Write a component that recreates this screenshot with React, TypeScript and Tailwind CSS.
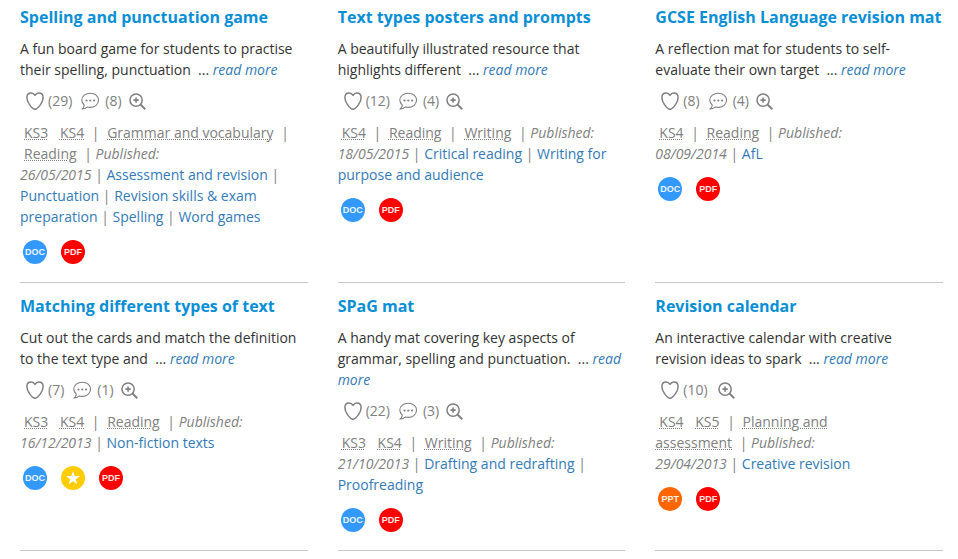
import { Fragment } from "react";

type FileType = "DOC" | "PDF" | "PPT" | "STAR";

interface Resource {
  title: string;
  summary: string;
  likes: number;
  comments?: number;
  stages: string[];
  subjects: string[];
  published: string;
  topics: string[];
  files: FileType[];
}

const resources: Resource[] = [
  {
    title: "Spelling and punctuation game",
    summary: "A fun board game for students to practise their spelling, punctuation",
    likes: 29,
    comments: 8,
    stages: ["KS3", "KS4"],
    subjects: ["Grammar and vocabulary", "Reading"],
    published: "26/05/2015",
    topics: ["Assessment and revision", "Punctuation", "Revision skills & exam preparation", "Spelling", "Word games"],
    files: ["DOC", "PDF"],
  },
  {
    title: "Text types posters and prompts",
    summary: "A beautifully illustrated resource that highlights different",
    likes: 12,
    comments: 4,
    stages: ["KS4"],
    subjects: ["Reading", "Writing"],
    published: "18/05/2015",
    topics: ["Critical reading", "Writing for purpose and audience"],
    files: ["DOC", "PDF"],
  },
  {
    title: "GCSE English Language revision mat",
    summary: "A reflection mat for students to self-evaluate their own target",
    likes: 8,
    comments: 4,
    stages: ["KS4"],
    subjects: ["Reading"],
    published: "08/09/2014",
    topics: ["AfL"],
    files: ["DOC", "PDF"],
  },
  {
    title: "Matching different types of text",
    summary: "Cut out the cards and match the definition to the text type and",
    likes: 7,
    comments: 1,
    stages: ["KS3", "KS4"],
    subjects: ["Reading"],
    published: "16/12/2013",
    topics: ["Non-fiction texts"],
    files: ["DOC", "STAR", "PDF"],
  },
  {
    title: "SPaG mat",
    summary: "A handy mat covering key aspects of grammar, spelling and punctuation.",
    likes: 22,
    comments: 3,
    stages: ["KS3", "KS4"],
    subjects: ["Writing"],
    published: "21/10/2013",
    topics: ["Drafting and redrafting", "Proofreading"],
    files: ["DOC", "PDF"],
  },
  {
    title: "Revision calendar",
    summary: "An interactive calendar with creative revision ideas to spark",
    likes: 10,
    stages: ["KS4", "KS5"],
    subjects: ["Planning and assessment"],
    published: "29/04/2013",
    topics: ["Creative revision"],
    files: ["PPT", "PDF"],
  },
];

const badgeColors: Record<FileType, string> = {
  DOC: "bg-[#3399ff]",
  PDF: "bg-[#ff0000]",
  PPT: "bg-[#ff6600]",
  STAR: "bg-[#ffcc00]",
};

const HeartIcon = () => (
  <svg width="18" height="18" viewBox="0 0 18 18" fill="none" stroke="currentColor" strokeWidth="1.5" strokeLinejoin="round">
    <path d="M9 3.4C8 1.700 6.800 1 5.200 1 2.600 1 .9 2.900.9 5.500c0 2.600 1 4.900 2.600 7.100 1.600 2.200 3.800 4.700 5.500 4.700s3.900-2.500 5.500-4.700c1.600-2.200 2.600-4.500 2.600-7.100C17.100 2.900 15.400 1 12.800 1 11.200 1 10 1.700 9 3.400z" />
  </svg>
);

const CommentIcon = () => (
  <svg width="18" height="18" viewBox="0 0 18 18" fill="none" stroke="currentColor" strokeWidth="1.100">
    <path d="M9.300 1.200C4.600 1.200.8 4.200.8 8c0 2 .9 3.700 2.400 5 .1 1.500-.5 2.800-1.900 4 2 0 3.700-.7 4.900-2 1 .3 2 .4 3.100.4 4.600 0 8.200-3.200 8.200-7.200S13.900 1.200 9.300 1.200z" />
    <g fill="currentColor" stroke="none">
      <circle cx="5.500" cy="8.500" r="1.100" />
      <circle cx="9.300" cy="8.500" r="1.100" />
      <circle cx="13.100" cy="8.500" r="1.100" />
    </g>
  </svg>
);

const ZoomIcon = () => (
  <svg width="17" height="17" viewBox="0 0 18 18" fill="none" stroke="currentColor" strokeWidth="1.600">
    <circle cx="7.500" cy="7.500" r="6.500" />
    <path d="M12.200 12.200l5 5" strokeWidth="2" />
    <path d="M7.500 4.700v5.600M4.700 7.500h5.600" strokeWidth="1.700" />
  </svg>
);

function FileBadge({ type }: { type: FileType }) {
  return (
    <span
      className={`flex size-6 items-center justify-center rounded-full font-['Liberation_Sans',Arial,sans-serif] text-[9px] leading-3 font-bold text-white/90 ${badgeColors[type]}`}
    >
      {type === "STAR" ? (
        <svg width="14" height="14" viewBox="0 0 14 14" className="fill-white">
          <path d="M7 0l1.700 5H14L9.800 8.200l1.500 5.100L7 10.200l-4.300 3.100 1.500-5.100L0 5h5.300z" />
        </svg>
      ) : (
        type
      )}
    </span>
  );
}

function Term({ name }: { name: string }) {
  return <abbr className="px-1 underline decoration-dotted decoration-1">{name}</abbr>;
}

function ResourceCard({ item }: { item: Resource }) {
  const hasComments = item.comments !== undefined;

  return (
    <article className="border-b border-[#c8c8c8] pb-[18px]">
      <h3 className="text-base leading-[22px] font-bold">
        <a href="#" className="text-[#0a8fd6]">{item.title}</a>
      </h3>

      <p className="mt-[10px] text-[#333]">
        {item.summary}&nbsp; ...{" "}
        <a href="#" className="text-[#337ab7] italic">read more</a>
      </p>

      <div className="mt-[7px] flex h-7 items-center pl-[6px]">
        <button type="button" aria-label="Like" className="flex items-center gap-1">
          <HeartIcon />
          <span className="pb-[2px]">({item.likes})</span>
        </button>
        {hasComments && (
          <a href="#" aria-label="Comments" className="ml-[9px] flex items-center gap-[6px]">
            <CommentIcon />
            <span className="pb-[2px]">({item.comments})</span>
          </a>
        )}
        <button type="button" aria-label="Preview" className={hasComments ? "ml-[7px]" : "ml-[10px]"}>
          <ZoomIcon />
        </button>
      </div>

      <p className="mt-[7px] pr-4">
        {item.stages.map((stage) => (
          <Fragment key={stage}>
            <Term name={stage} />{" "}
          </Fragment>
        ))}
        {item.subjects.map((subject, i) => (
          <Fragment key={subject}>
            {"| "}
            <Term name={subject} />
            {i < item.subjects.length - 1 && " "}
          </Fragment>
        ))}
        <em className="whitespace-nowrap">
          <span className="not-italic">&nbsp;| </span>
          Published:
          <br />
          {item.published}
        </em>
        {item.topics.map((topic) => (
          <Fragment key={topic}>
            {" | "}
            <a href="#" className="text-[#337ab7]">{topic}</a>
          </Fragment>
        ))}
      </p>

      <div className="mt-[13px] flex gap-[14px] pl-[3px]">
        {item.files.map((type) => (
          <FileBadge key={type} type={type} />
        ))}
      </div>
    </article>
  );
}

export default function App() {
  return (
    <main className="grid grid-cols-3 gap-x-[30px] gap-y-3 bg-white pt-[6px] pr-[15px] pl-5 font-['Open_Sans',sans-serif] text-sm leading-[21px] text-[#808080]">
      {resources.map((item) => (
        <ResourceCard key={item.title} item={item} />
      ))}
    </main>
  );
}
